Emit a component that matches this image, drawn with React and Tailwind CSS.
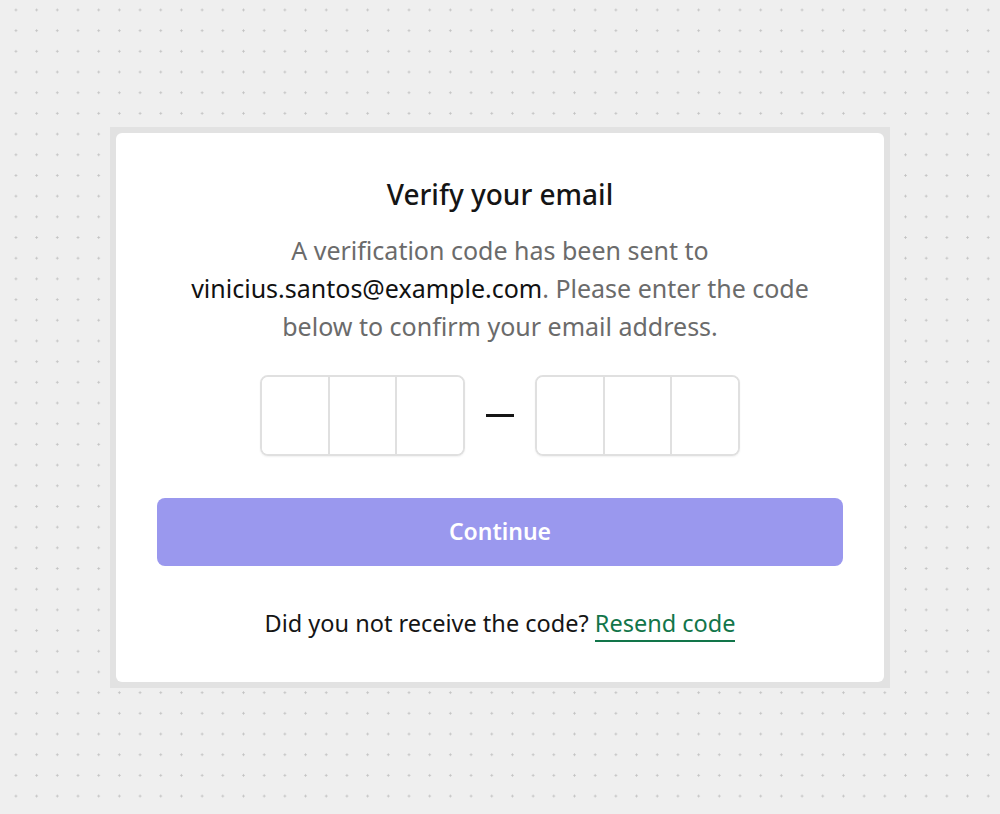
export default function App() {
  return (
    <div
      className="min-h-screen w-full flex items-center justify-center bg-[#efefef] bg-[radial-gradient(circle,#c2c2c2_0.9px,transparent_1.3px)] bg-[size:20.7px_20.7px] bg-[position:5.6px_-0.4px]"
      style={{ fontFamily: '"Noto Sans", "Open Sans", sans-serif' }}
    >
      <div className="w-[780px] border-[6px] border-[#e2e2e2] bg-[#e2e2e2]">
        <div className="bg-white rounded-md px-[41px] pt-[43px] pb-[42px] flex flex-col items-center text-center">
          <h1 className="text-[28px] leading-[36px] font-medium text-[#151515]">Verify your email</h1>
          <p className="mt-[19px] text-[25px] leading-[38px] text-[#6b6b6b] max-w-[645px]">
            A verification code has been sent to{" "}
            <span className="text-[#111]">vinicius.santos@example.com</span>. Please enter the code below to confirm your email address.
          </p>

          <div className="mt-[30px] flex items-center gap-[21px]">
            <CodeGroup />
            <div className="w-[28px] h-[3px] bg-[#151515]" />
            <CodeGroup />
          </div>

          <button className="mt-[42px] w-full h-[68px] rounded-lg bg-[#9a98ee] text-white text-[23px] font-semibold">
            Continue
          </button>

          <div className="mt-[41px] text-[23.5px] leading-[33px] text-[#151515]">
            Did you not receive the code?{" "}
            <a href="#" className="text-[#12754a] border-b-2 border-[#12754a] pb-[1px]">
              Resend code
            </a>
          </div>
        </div>
      </div>
    </div>
  );
}

function CodeGroup() {
  return (
    <div className="flex w-[205px] h-[81px] rounded-lg border-2 border-[#e0e0e0] shadow-[0_1px_2px_rgba(0,0,0,0.06)] overflow-hidden">
      {[0, 1, 2].map((i) => (
        <input
          key={i}
          maxLength={1}
          className={`flex-1 min-w-0 h-full outline-none bg-white text-center text-[28px] ${i > 0 ? "border-l-2 border-[#e0e0e0]" : ""}`}
        />
      ))}
    </div>
  );
}
